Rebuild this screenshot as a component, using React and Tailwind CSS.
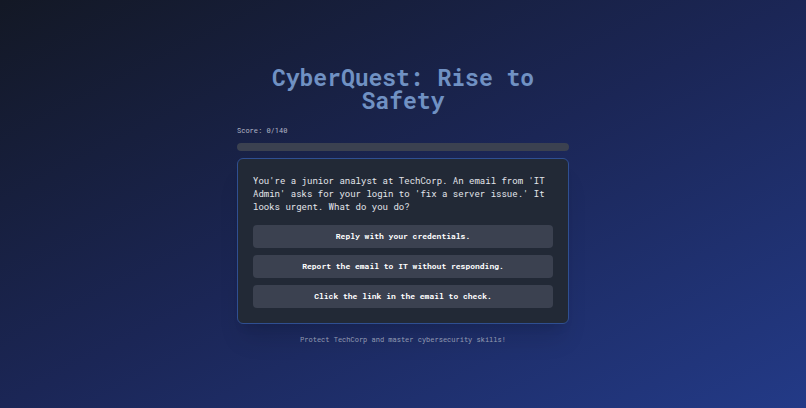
const choices = [
  'Reply with your credentials.',
  'Report the email to IT without responding.',
  'Click the link in the email to check.',
];

export default function App() {
  return (
    <div className="flex min-h-screen flex-col items-center justify-center bg-[linear-gradient(to_bottom_right,#131825,#1b2656_50%,#233a87)] px-3 pt-[14px] pb-3 font-['Roboto_Mono','Liberation_Mono',monospace] text-gray-100">
      <main className="flex w-full max-w-[332px] flex-col">
        <h1 className="mb-[13px] text-center text-[23px] leading-[23px] font-bold text-[#7091c3]">
          CyberQuest: Rise to Safety
        </h1>
        <label htmlFor="score" className="mb-[6px] text-[7px] leading-[12px] text-[#b5bac8]">Score: 0/140</label>
        <progress
          id="score"
          value={0}
          max={140}
          className="mb-[7px] h-2 w-full appearance-none overflow-hidden rounded-full bg-[#3b4150] [&::-webkit-progress-bar]:bg-[#3b4150]"
        />
        <section className="rounded-md border border-[#2f4f91] bg-[#222936] p-[15px] shadow-xl">
          <p className="mb-3 text-[9px] leading-[13px] text-[#e2e5eb]">
            You're a junior analyst at TechCorp. An email from 'IT Admin' asks for your login to 'fix a server issue.' It looks urgent. What do you do?
          </p>
          <div className="flex flex-col gap-[7px]">
            {choices.map((choice) => (
              <button key={choice} type="button" className="h-[23px] rounded bg-[#3b4150] text-[8px] font-bold text-white">
                {choice}
              </button>
            ))}
          </div>
        </section>
        <p className="mt-[11px] text-center text-[7px] leading-[10px] text-[#939bb2]">
          Protect TechCorp and master cybersecurity skills!
        </p>
      </main>
    </div>
  );
}
